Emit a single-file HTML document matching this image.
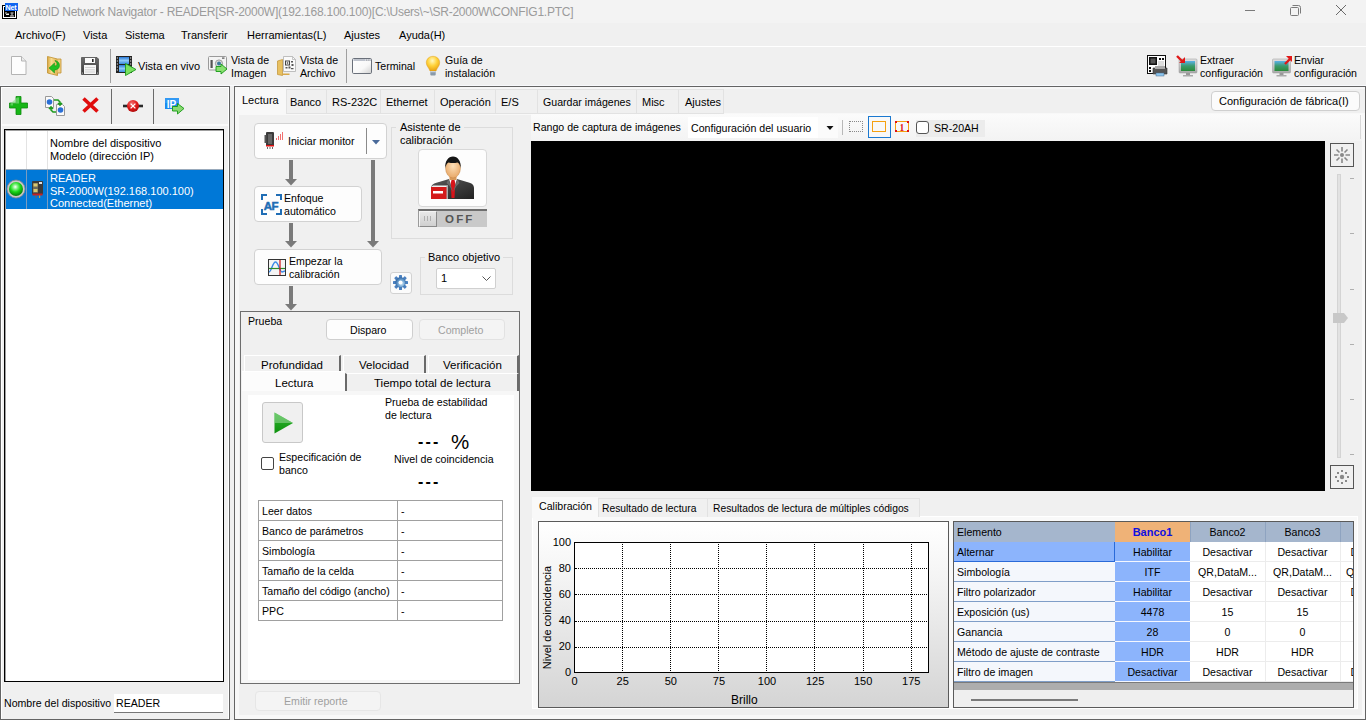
<!DOCTYPE html>
<html><head><meta charset="utf-8">
<style>
*{box-sizing:border-box}
html,body{margin:0;padding:0}
body{width:1366px;height:720px;overflow:hidden;position:relative;background:#f0f0f0;font-family:"Liberation Sans",sans-serif;font-size:11px;color:#000}
.a{position:absolute}
.t{position:absolute;white-space:nowrap;line-height:13px}
svg{position:absolute;overflow:visible}
table.a td{border:1px solid #a0a0a0;height:20px;padding:0 0 0 3px;line-height:18px;white-space:nowrap}
</style></head><body>
<!-- TITLE BAR -->
<div class="a" style="left:0;top:0;width:1366px;height:23px;background:#f3f3f3"></div>
<svg style="left:2px;top:3px" width="16" height="16" viewBox="0 0 16 16">
<rect x="0.5" y="2.5" width="14" height="13" fill="#fff" stroke="#000"/>
<rect x="2" y="4" width="11" height="10" fill="#000"/>
<path d="M3 10h2M4 11.5h3M6 10v1.5M8.5 10h3M10 10.5v2M8 13h4" stroke="#fff" stroke-width="0.9"/>
<rect x="3" y="0" width="13" height="8" fill="#0f64f0"/>
<text x="3.6" y="7.2" font-size="7.2" font-weight="bold" fill="#fff" font-family="Liberation Sans" letter-spacing="-0.3">Net</text>
</svg>
<div class="t" style="left:24px;top:5px;font-size:12px;letter-spacing:-0.25px;color:#9b9b9b;line-height:15px">AutoID Network Navigator - READER[SR-2000W](192.168.100.100)[C:\Users\~\SR-2000W\CONFIG1.PTC]</div>
<svg style="left:1245px;top:10px" width="10" height="1"><rect x="0" y="0" width="10" height="1" fill="#7a7a7a"/></svg>
<svg style="left:1290px;top:5px" width="11" height="11" viewBox="0 0 11 11"><rect x="0.5" y="2.5" width="8" height="8" rx="1" fill="none" stroke="#7a7a7a"/><path d="M2.5 0.5h6a2 2 0 0 1 2 2v6" fill="none" stroke="#7a7a7a"/></svg>
<svg style="left:1336px;top:5px" width="10" height="10" viewBox="0 0 10 10"><path d="M0 0L10 10M10 0L0 10" stroke="#6a6a6a" stroke-width="1"/></svg>

<!-- MENU -->
<div class="t" style="left:15px;top:29px;font-size:11px">Archivo(F)</div>
<div class="t" style="left:83px;top:29px;font-size:11px">Vista</div>
<div class="t" style="left:125px;top:29px;font-size:11px">Sistema</div>
<div class="t" style="left:181px;top:29px;font-size:11px">Transferir</div>
<div class="t" style="left:247px;top:29px;font-size:11px">Herramientas(L)</div>
<div class="t" style="left:344px;top:29px;font-size:11px">Ajustes</div>
<div class="t" style="left:399px;top:29px;font-size:11px">Ayuda(H)</div>
<div class="a" style="left:0;top:46px;width:1366px;height:1px;background:#fff"></div>

<!-- TOOLBAR -->
<!-- new doc -->
<svg style="left:11px;top:56px" width="16" height="19" viewBox="0 0 16 19"><path d="M0.5 0.5h10l4.5 4.5v13.5h-14.5z" fill="#fdfdfd" stroke="#b4b4b4"/><path d="M10.5 0.5v4.5h4.5" fill="#ececec" stroke="#b4b4b4"/></svg>
<!-- open -->
<svg style="left:47px;top:56px" width="15" height="20" viewBox="0 0 15 20"><defs><linearGradient id="gfold" x1="0" y1="0" x2="1" y2="0"><stop offset="0" stop-color="#d9a840"/><stop offset="0.4" stop-color="#f8dc90"/><stop offset="1" stop-color="#e0b050"/></linearGradient></defs><path d="M0.5 0.5l10 2.5v16.5l-10-2.5z" fill="url(#gfold)" stroke="#c09030" stroke-width="0.8"/><path d="M10.5 3h3.5v14h-3.5" fill="#f0d080" stroke="#c09030" stroke-width="0.8"/><path d="M8 4.5c3 0.5 4.5 2.5 4.5 5c0 3-2.5 4.5-5 4.5v3l-5.5-5l5.5-5v3c1.5 0 2.5-0.8 2.5-2c0-1.5-1-2.5-2-3z" fill="#22c022" stroke="#138a13" stroke-width="0.5"/></svg>
<!-- save -->
<svg style="left:81px;top:57px" width="18" height="18" viewBox="0 0 18 18"><defs><linearGradient id="gsave" x1="0" y1="0" x2="0" y2="1"><stop offset="0" stop-color="#6a6a6a"/><stop offset="1" stop-color="#3a3a3a"/></linearGradient></defs><path d="M0.5 0.5h15.5l1.5 1.5v15.5h-17z" fill="url(#gsave)" stroke="#333" stroke-width="0.6"/><rect x="4" y="1" width="10" height="5" fill="#fafafa"/><rect x="11" y="2" width="1.6" height="3" fill="#222"/><rect x="3" y="8" width="12" height="9" fill="#f4f4f4"/><path d="M4 10.5h10M4 12.8h10M4 15h10" stroke="#c8c8c8" stroke-width="0.8"/><circle cx="1.5" cy="16" r="0.6" fill="#ddd"/><circle cx="16.5" cy="16" r="0.6" fill="#ddd"/></svg>
<div class="a" style="left:110px;top:49px;width:1px;height:34px;background:#a0a0a0"></div>
<!-- vista en vivo -->
<svg style="left:116px;top:56px" width="21" height="20" viewBox="0 0 21 20"><defs><linearGradient id="gfilm" x1="0" y1="0" x2="0" y2="1"><stop offset="0" stop-color="#2a7ad8"/><stop offset="0.5" stop-color="#8ec8f8"/><stop offset="1" stop-color="#3a8ae0"/></linearGradient></defs><rect x="0" y="0" width="16" height="17" fill="#222"/><rect x="3" y="1" width="10" height="7" fill="url(#gfilm)"/><rect x="3" y="9" width="10" height="7" fill="url(#gfilm)"/><g fill="#ddd"><rect x="0.8" y="1.5" width="1.2" height="1"/><rect x="0.8" y="4.5" width="1.2" height="1"/><rect x="0.8" y="7.5" width="1.2" height="1"/><rect x="0.8" y="10.5" width="1.2" height="1"/><rect x="0.8" y="13.5" width="1.2" height="1"/><rect x="14" y="1.5" width="1.2" height="1"/><rect x="14" y="4.5" width="1.2" height="1"/><rect x="14" y="7.5" width="1.2" height="1"/><rect x="14" y="10.5" width="1.2" height="1"/><rect x="14" y="13.5" width="1.2" height="1"/></g><path d="M9.5 7.5l10.5 6l-10.5 6z" fill="#7ae060" stroke="#1a9a1a" stroke-width="0.9" stroke-linejoin="round"/></svg>
<div class="t" style="left:138px;top:60px">Vista en vivo</div>
<!-- vista de imagen -->
<svg style="left:208px;top:56px" width="21" height="20" viewBox="0 0 21 20"><rect x="0.5" y="0.5" width="18" height="13.5" rx="1" fill="#f4f4f4" stroke="#9a9a9a"/><rect x="2.5" y="4" width="2.2" height="8" fill="#555"/><circle cx="11" cy="7.5" r="3.6" fill="#ddd" stroke="#888" stroke-width="0.8"/><circle cx="11" cy="7.5" r="2" fill="#3a7a9a"/><rect x="14" y="1.5" width="2.5" height="1.2" fill="#555"/><path d="M8 10.5h5v-2.5l6 5l-6 5v-2.5h-5z" fill="#8ae070" stroke="#159a15" stroke-width="0.9" stroke-linejoin="round"/></svg>
<div class="t" style="left:231px;top:54px;line-height:13px;font-size:10.6px">Vista de<br>Imagen</div>
<!-- vista de archivo -->
<svg style="left:277px;top:56px" width="20" height="20" viewBox="0 0 20 20"><path d="M0.5 5l5-1.5v16l-5-1z" fill="#e8c060" stroke="#c09030" stroke-width="0.7"/><path d="M5.5 17.5h7v1.5h-7" fill="#d8a848"/><path d="M6.5 0.5h9l3 3v12h-12z" fill="#fafafa" stroke="#b0b0b0" stroke-width="0.8"/><path d="M15.5 0.5v3h3" fill="none" stroke="#b0b0b0" stroke-width="0.7"/><rect x="8.5" y="5" width="4" height="4" fill="none" stroke="#444" stroke-width="1"/><rect x="9.8" y="6.3" width="1.4" height="1.4" fill="#444"/><path d="M14 5h2v1.5h-2zM14.5 8h2v2h-2zM8.5 11h2v1.5h-2zM11.5 10.5h2v2h-2zM14 12h2.5v1.2h-2.5z" fill="#555"/></svg>
<div class="t" style="left:300px;top:54px;line-height:13px;font-size:10.6px">Vista de<br>Archivo</div>
<div class="a" style="left:346px;top:49px;width:1px;height:34px;background:#a0a0a0"></div>
<!-- terminal -->
<svg style="left:352px;top:58px" width="21" height="16" viewBox="0 0 21 16"><defs><linearGradient id="gterm" x1="0" y1="0" x2="1" y2="1"><stop offset="0" stop-color="#fff"/><stop offset="0.6" stop-color="#f8f8f8"/><stop offset="1" stop-color="#d0d0d0"/></linearGradient></defs><rect x="0.5" y="0.5" width="19" height="15" rx="1.2" fill="url(#gterm)" stroke="#6a707a"/><rect x="1" y="1" width="18" height="2" fill="#d8dce4"/><path d="M2 2h11" stroke="#9aa0aa" stroke-width="0.8"/><circle cx="14.5" cy="2" r="0.6" fill="#888"/><circle cx="16.3" cy="2" r="0.6" fill="#888"/><circle cx="18" cy="2" r="0.6" fill="#888"/></svg>
<div class="t" style="left:375px;top:60px;font-size:10.6px">Terminal</div>
<!-- bulb -->
<svg style="left:426px;top:56px" width="14" height="20" viewBox="0 0 14 20"><defs><radialGradient id="gbulb" cx="0.45" cy="0.3" r="0.7"><stop offset="0" stop-color="#fff8c0"/><stop offset="0.5" stop-color="#ffd23a"/><stop offset="1" stop-color="#e8a010"/></radialGradient></defs><path d="M7 0.3c3.8 0 6.7 2.8 6.7 6.4c0 3.2-2.6 5-3.7 8.3h-6c-1.1-3.3-3.7-5.1-3.7-8.3c0-3.6 2.9-6.4 6.7-6.4z" fill="url(#gbulb)" stroke="#e0a020" stroke-width="0.5"/><rect x="4.3" y="15" width="5.4" height="4.5" rx="1" fill="#8a9aaa"/><rect x="4.3" y="15" width="5.4" height="1.3" fill="#c8d0d8"/></svg>
<div class="t" style="left:445px;top:54px;line-height:13px;font-size:10.6px">Guía de<br>instalación</div>
<!-- right toolbar -->
<svg style="left:1147px;top:55px" width="21" height="22" viewBox="0 0 21 22"><rect x="0.5" y="0.5" width="18" height="18" fill="#fff" stroke="#111"/><rect x="2" y="2" width="8" height="8" fill="#111"/><rect x="3.5" y="3.5" width="5" height="5" fill="#555"/><path d="M12 3h2v2h-2zM15 3h2v2h-2zM12 7h5v1h-5zM2 12h2v2h-2zM2 15h2v2h-2z" fill="#111"/><rect x="11" y="6" width="6" height="5" fill="#ddd"/><path d="M6 13h14v6h-14z" fill="#555" stroke="#333" stroke-width="0.6"/><rect x="8" y="11" width="10" height="3" fill="#aaa"/><rect x="9" y="18" width="8" height="3" fill="#8ec8f0" stroke="#4a6a8a" stroke-width="0.5"/></svg>
<svg style="left:1176px;top:55px" width="22" height="22" viewBox="0 0 22 22"><defs><linearGradient id="gscr" x1="0" y1="0" x2="0" y2="1"><stop offset="0" stop-color="#5ab0e8"/><stop offset="0.5" stop-color="#3a9a6a"/><stop offset="1" stop-color="#2a8a3a"/></linearGradient><linearGradient id="gfr" x1="0" y1="0" x2="0" y2="1"><stop offset="0" stop-color="#e0e0e0"/><stop offset="1" stop-color="#a8a8a8"/></linearGradient></defs><rect x="3" y="4" width="18" height="14" rx="1" fill="url(#gfr)" stroke="#999" stroke-width="0.5"/><rect x="5" y="6" width="14" height="10" fill="url(#gscr)"/><rect x="10" y="18" width="4" height="2" fill="#999"/><rect x="7" y="20" width="10" height="1.5" fill="#aaa"/><path d="M1 1l6 6" stroke="#e01818" stroke-width="2.4"/><path d="M3 8h6v-6z" fill="#e01818"/></svg>
<div class="t" style="left:1200px;top:54px;line-height:13px;font-size:10.6px">Extraer<br>configuración</div>
<svg style="left:1272px;top:55px" width="22" height="22" viewBox="0 0 22 22"><rect x="0.5" y="4" width="18" height="14" rx="1" fill="url(#gfr)" stroke="#999" stroke-width="0.5"/><rect x="2.5" y="6" width="14" height="10" fill="url(#gscr)"/><rect x="7.5" y="18" width="4" height="2" fill="#999"/><rect x="4.5" y="20" width="10" height="1.5" fill="#aaa"/><path d="M13 9l6-6" stroke="#e01818" stroke-width="2.4"/><path d="M14 1h6v6z" fill="#e01818"/></svg>
<div class="t" style="left:1294px;top:54px;line-height:13px;font-size:10.6px">Enviar<br>configuración</div>


<!-- LEFT PANEL -->
<div class="a" style="left:0;top:85px;width:1366px;height:1px;background:#f8f9fc"></div>
<div class="a" style="left:0;top:86px;width:230px;height:634px;border:1px solid #646464;box-shadow:inset 1px 1px 0 #fff, inset -1px 0 0 #fff"></div>
<div class="a" style="left:2px;top:124px;width:226px;height:2px;background:#fafafa"></div>
<!-- plus -->
<svg style="left:9px;top:96px" width="19" height="19" viewBox="0 0 19 19"><path d="M7 0.5h5v6.5h6.5v5h-6.5v6.5h-5v-6.5h-6.5v-5h6.5z" fill="#17b617" stroke="#0c8a0c" stroke-width="0.8"/><path d="M8 1.5h2v6h-6v2h-2.5v-2" fill="#8be08b" opacity="0.6"/></svg>
<!-- sync -->
<svg style="left:45px;top:96px" width="21" height="20" viewBox="0 0 21 20"><path d="M0.5 0.5h6l2 2v9h-8z" fill="#fafafa" stroke="#999"/><circle cx="4.5" cy="6" r="2.8" fill="#2a6fd6"/><path d="M11.5 8.5h6l2 2v9h-8z" fill="#fafafa" stroke="#999"/><circle cx="15.5" cy="14" r="2.8" fill="#2a6fd6"/><path d="M9 4h4l2 2v3M17 7l-2 2l-2-2" stroke="#1e9a1e" stroke-width="1.6" fill="none"/><path d="M11 16h-3l-2-2v-3M4 13l2-2l2 2" stroke="#1e9a1e" stroke-width="1.6" fill="none"/></svg>
<!-- X -->
<svg style="left:82px;top:97px" width="17" height="16" viewBox="0 0 17 16"><path d="M1.5 1.5L15.5 14.5M15.5 1.5L1.5 14.5" stroke="#e00d0d" stroke-width="3.6"/></svg>
<div class="a" style="left:111px;top:89px;width:1px;height:35px;background:#6a6a6a"></div>
<!-- disconnect -->
<svg style="left:122px;top:97px" width="22" height="18" viewBox="0 0 22 18"><path d="M1 9h20" stroke="#2a2a2a" stroke-width="2.6"/><defs><radialGradient id="gdis" cx="0.4" cy="0.3" r="0.7"><stop offset="0" stop-color="#f07070"/><stop offset="0.6" stop-color="#e01818"/><stop offset="1" stop-color="#b00c0c"/></radialGradient></defs><circle cx="11" cy="9" r="6" fill="url(#gdis)"/><path d="M8.6 6.6l4.8 4.8M13.4 6.6l-4.8 4.8" stroke="#fff" stroke-width="1.3"/></svg>
<div class="a" style="left:153px;top:89px;width:1px;height:35px;background:#6a6a6a"></div>
<!-- IP -->
<svg style="left:165px;top:97px" width="21" height="19" viewBox="0 0 21 19"><rect x="0" y="1" width="14" height="11" fill="#1a8af0"/><rect x="0" y="1" width="14" height="5" fill="#4aa8f8" opacity="0.5"/><text x="1.8" y="10.5" font-size="10" font-weight="bold" fill="#fff" font-family="Liberation Sans">IP</text><path d="M7.5 9.5h5v-3l6.5 5l-6.5 5.5v-3h-5z" fill="#8ad870" stroke="#139a13" stroke-width="0.9" stroke-linejoin="round"/></svg>
<!-- list -->
<div class="a" style="left:4px;top:129px;width:220px;height:553px;background:#fff;border:1px solid #000;box-shadow:inset 1px 1px 0 #a0a0a0"></div>
<div class="a" style="left:26px;top:131px;width:1px;height:39px;background:#e3e3e3"></div>
<div class="a" style="left:47px;top:131px;width:1px;height:39px;background:#e3e3e3"></div>
<div class="t" style="left:50px;top:137px;font-size:11px;line-height:13px">Nombre del dispositivo<br>Modelo (dirección IP)</div>
<div class="a" style="left:6px;top:169px;width:217px;height:40px;background:#0078d7"></div>
<div class="a" style="left:26px;top:169px;width:1px;height:40px;background:#7a9cc0"></div>
<div class="a" style="left:47px;top:169px;width:1px;height:40px;background:#7a9cc0"></div>
<div class="a" style="left:6px;top:169px;width:217px;height:1px;background:#9ab"></div>
<svg style="left:6px;top:179px" width="20" height="20" viewBox="0 0 20 20"><defs><radialGradient id="gled" cx="0.45" cy="0.35" r="0.6"><stop offset="0" stop-color="#ffffff"/><stop offset="0.3" stop-color="#7af07a"/><stop offset="0.6" stop-color="#18d818"/><stop offset="1" stop-color="#0a8a0a"/></radialGradient></defs><circle cx="10" cy="10" r="9" fill="#c8c8c8" stroke="#888" stroke-width="0.8"/><circle cx="10" cy="10" r="7" fill="url(#gled)"/></svg>
<svg style="left:32px;top:181px" width="11" height="17" viewBox="0 0 11 17"><rect x="0" y="0" width="11" height="13.5" rx="1" fill="#3a3a3a"/><rect x="1" y="2" width="5" height="10" fill="#6a6a5a"/><rect x="1.5" y="2.5" width="4" height="3" fill="#d8c870"/><rect x="1.5" y="8" width="4" height="3" fill="#d8c870"/><rect x="7" y="1" width="3" height="2" fill="#e0e0e0"/><rect x="0.5" y="12.5" width="10" height="2" fill="#c82020"/><rect x="3.5" y="14.5" width="1.2" height="2.5" fill="#666"/><rect x="7" y="14.5" width="1.2" height="2.5" fill="#c8a040"/></svg>
<div class="t" style="left:50px;top:172px;font-size:11px;line-height:12.5px;color:#fff">READER<br>SR-2000W(192.168.100.100)<br>Connected(Ethernet)</div>
<div class="t" style="left:4px;top:697px;font-size:10.6px">Nombre del dispositivo</div>
<div class="a" style="left:114px;top:694px;width:109px;height:19px;background:#fff;border-bottom:1px solid #777"></div>
<div class="t" style="left:116px;top:697px;font-size:10.6px">READER</div>


<!-- MAIN PANEL -->
<div class="a" style="left:234px;top:86px;width:1132px;height:634px;border:1px solid #646464;background:#f0f0f0;box-shadow:inset 1px 1px 0 #fff"></div>
<div class="a" style="left:235px;top:87px;width:1130px;height:2px;background:#f6f6f6"></div>
<div class="a" style="left:235px;top:113px;width:1130px;height:606px;background:#f8f8f8"></div>
<!-- tabs -->
<div class="a" style="left:286px;top:89px;width:438px;height:25px;background:#f0f0f0;border:1px solid #e2e2e2"></div>
<div class="a" style="left:326px;top:89px;width:1px;height:25px;background:#e2e2e2"></div>
<div class="a" style="left:380px;top:89px;width:1px;height:25px;background:#e2e2e2"></div>
<div class="a" style="left:434px;top:89px;width:1px;height:25px;background:#e2e2e2"></div>
<div class="a" style="left:495px;top:89px;width:1px;height:25px;background:#e2e2e2"></div>
<div class="a" style="left:537px;top:89px;width:1px;height:25px;background:#e2e2e2"></div>
<div class="a" style="left:636px;top:89px;width:1px;height:25px;background:#e2e2e2"></div>
<div class="a" style="left:678px;top:89px;width:1px;height:25px;background:#e2e2e2"></div>
<div class="a" style="left:235px;top:87px;width:51px;height:28px;background:#f8f8f8"></div>
<div class="t" style="left:242px;top:94px">Lectura</div>
<div class="t" style="left:290px;top:96px">Banco</div>
<div class="t" style="left:332px;top:96px">RS-232C</div>
<div class="t" style="left:386px;top:96px">Ethernet</div>
<div class="t" style="left:440px;top:96px">Operación</div>
<div class="t" style="left:501px;top:96px">E/S</div>
<div class="t" style="left:543px;top:96px;font-size:10.6px">Guardar imágenes</div>
<div class="t" style="left:642px;top:96px">Misc</div>
<div class="t" style="left:685px;top:96px">Ajustes</div>
<div class="a" style="left:1211px;top:91px;width:149px;height:20px;background:#fbfbfb;border:1px solid #cfcfcf;border-radius:4px"></div>
<div class="t" style="left:1219px;top:95px">Configuración de fábrica(I)</div>
<!-- tab page -->
<div class="a" style="left:239px;top:115px;width:1123px;height:600px;background:#f0f0f0"></div>

<!-- LEFT CONFIG -->
<!-- Iniciar monitor -->
<div class="a" style="left:254px;top:123px;width:133px;height:36px;background:#fdfdfd;border:1px solid #d2d2d2;border-radius:4px"></div>
<svg style="left:264px;top:130px" width="20" height="20" viewBox="0 0 20 20"><rect x="2" y="2" width="8" height="14" rx="1" fill="#3b3b3b"/><rect x="0.5" y="5" width="2" height="8" fill="#555"/><rect x="4" y="4" width="4" height="10" fill="#666"/><rect x="2" y="15" width="8" height="1.5" fill="#e01010"/><path d="M3.5 17v2M6 17v2M8.5 17v2" stroke="#444" stroke-width="0.8"/><path d="M12.5 8v2M14.5 6v4M16.5 4v6M18.5 2v8" stroke="#f07070" stroke-width="1"/></svg>
<div class="t" style="left:288px;top:135px;font-size:10.6px">Iniciar monitor</div>
<div class="a" style="left:366px;top:128px;width:1px;height:26px;background:#8a8a8a"></div>
<svg style="left:372px;top:140px" width="8" height="5" viewBox="0 0 8 5"><path d="M0 0h8l-4 4.5z" fill="#4a6a9a"/></svg>
<!-- arrows -->
<div class="a" style="left:289px;top:160px;width:4px;height:20px;background:#7a7a7a"></div>
<svg style="left:285px;top:179px" width="12" height="7" viewBox="0 0 12 7"><path d="M0 0h12l-6 6.5z" fill="#7a7a7a"/></svg>
<div class="a" style="left:289px;top:223px;width:4px;height:19px;background:#7a7a7a"></div>
<svg style="left:285px;top:241px" width="12" height="7" viewBox="0 0 12 7"><path d="M0 0h12l-6 6.5z" fill="#7a7a7a"/></svg>
<div class="a" style="left:289px;top:286px;width:4px;height:19px;background:#7a7a7a"></div>
<svg style="left:285px;top:304px" width="12" height="7" viewBox="0 0 12 7"><path d="M0 0h12l-6 6.5z" fill="#7a7a7a"/></svg>
<div class="a" style="left:371px;top:160px;width:4px;height:82px;background:#7a7a7a"></div>
<svg style="left:367px;top:241px" width="12" height="7" viewBox="0 0 12 7"><path d="M0 0h12l-6 6.5z" fill="#7a7a7a"/></svg>
<!-- Enfoque -->
<div class="a" style="left:254px;top:186px;width:108px;height:36px;background:#fdfdfd;border:1px solid #d2d2d2;border-radius:4px"></div>
<svg style="left:261px;top:194px" width="21" height="21" viewBox="0 0 21 21"><path d="M1 6v-5h5M15 1h5v5M20 15v5h-5M6 20h-5v-5" stroke="#1f6db5" stroke-width="2" fill="none"/><text x="2.8" y="15.8" font-size="11.5" font-weight="bold" fill="#1f6db5" stroke="#1f6db5" stroke-width="0.5" font-family="Liberation Sans" letter-spacing="-0.5">AF</text></svg>
<div class="t" style="left:284px;top:192px;font-size:10.6px;line-height:13px">Enfoque<br>automático</div>
<!-- Empezar -->
<div class="a" style="left:254px;top:249px;width:128px;height:36px;background:#fdfdfd;border:1px solid #d2d2d2;border-radius:4px"></div>
<svg style="left:268px;top:259px" width="18" height="17" viewBox="0 0 18 17"><rect x="0.5" y="0.5" width="17" height="16" fill="#f4f4f4" stroke="#333"/><path d="M1 13c2.5 0 3.5-10 6.5-10s4 10 6.5 10c1.5 0 2-1 3-1" stroke="#3a8ae8" stroke-width="1.4" fill="none"/><path d="M1 9.5h16" stroke="#2a8a2a" stroke-width="1.2"/><path d="M12 1v15" stroke="#d01010" stroke-width="1.2"/></svg>
<div class="t" style="left:289px;top:255px;font-size:10.6px;line-height:13px">Empezar la<br>calibración</div>
<!-- Asistente group -->
<div class="a" style="left:391px;top:127px;width:122px;height:112px;border:1px solid #dcdcdc"></div>
<div class="a" style="left:396px;top:120px;width:68px;height:14px;background:#f0f0f0"></div>
<div class="t" style="left:400px;top:121px;font-size:11px;line-height:13px;background:#f0f0f0;padding-right:3px">Asistente de<br>calibración</div>
<div class="a" style="left:418px;top:149px;width:69px;height:58px;background:#fdfdfd;border:1px solid #d8d8d8;border-radius:4px"></div>
<svg style="left:431px;top:156px" width="44" height="43" viewBox="0 0 44 43">
<defs><linearGradient id="gsuit" x1="0" y1="0" x2="1" y2="1"><stop offset="0" stop-color="#5a5a5a"/><stop offset="1" stop-color="#222"/></linearGradient>
<radialGradient id="gface" cx="0.5" cy="0.4" r="0.6"><stop offset="0" stop-color="#fde0b8"/><stop offset="1" stop-color="#e8a868"/></radialGradient></defs>
<path d="M0 43v-11c0-3 3-5 8-6l10-3h8l10 3c5 1 7 3 7 6v11z" fill="url(#gsuit)"/>
<path d="M18 23l4 13l4-13z" fill="#fff"/>
<path d="M20.5 24h3l0.8 3l-0.8 15h-3l-0.8-15z" fill="#d8141a"/>
<path d="M17.5 23l-2 4l3 3l3.5 6zM26.5 23l2 4l-3 3l-3.5 6z" fill="#6a6a6a"/>
<rect x="18.5" y="17" width="7" height="7" fill="#d99a5a"/>
<ellipse cx="22" cy="12" rx="7.5" ry="10" fill="url(#gface)" stroke="#c08040" stroke-width="0.4"/>
<path d="M14.3 12c-0.5-7 3-11.5 7.7-11.5s8.2 4.5 7.7 11.5c-0.6-3-1.6-5-3.2-5.6c-3 0.8-6 0.8-9 0c-1.6 0.6-2.6 2.6-3.2 5.6z" fill="#151515"/>
<rect x="0" y="31" width="17" height="12" fill="#d41a1a"/>
<path d="M0 31l2-1.5h15v1.5" fill="#f0f0f0"/>
<rect x="15.5" y="30" width="1.5" height="13" fill="#aaa"/>
<rect x="2" y="35" width="10" height="2.5" fill="#fff"/>
</svg>
<div class="a" style="left:418px;top:209px;width:69px;height:18px;background:#c9c9c9;border-top:2px solid #6e6e6e;border-left:1px solid #9a9a9a"></div>
<div class="a" style="left:419px;top:211px;width:18px;height:16px;background:linear-gradient(#e8e8e8,#d0d0d0);border:1px solid #8a8a8a;border-top-color:#f4f4f4;border-left-color:#f4f4f4"></div><svg style="left:423px;top:216px" width="9" height="5"><path d="M1.5 0v5M4.5 0v5M7.5 0v5" stroke="#b0b0b0"/></svg>
<div class="t" style="left:445px;top:213px;font-size:11.5px;font-weight:bold;color:#555;letter-spacing:2.2px">OFF</div>
<!-- Banco objetivo group -->
<div class="a" style="left:420px;top:257px;width:93px;height:38px;border:1px solid #dcdcdc"></div>
<div class="t" style="left:425px;top:251px;font-size:11px;background:#f0f0f0;padding:0 3px">Banco objetivo</div>
<div class="a" style="left:436px;top:268px;width:60px;height:21px;background:#fff;border:1px solid #d0d0d0;border-radius:2px"></div>
<div class="t" style="left:441px;top:272px;font-size:11px">1</div>
<svg style="left:482px;top:276px" width="9" height="5" viewBox="0 0 9 5"><path d="M0.5 0.5l4 4l4-4" stroke="#555" fill="none"/></svg>
<!-- gear -->
<div class="a" style="left:390px;top:272px;width:22px;height:22px;background:#fbfbfb;border:1px solid #d2d2d2;border-radius:3px"></div>
<svg style="left:393px;top:275px" width="15" height="15" viewBox="0 0 15 15"><defs><radialGradient id="ggear" cx="0.6" cy="0.6" r="0.6"><stop offset="0" stop-color="#d8ecf8"/><stop offset="0.6" stop-color="#6aa0d0"/><stop offset="1" stop-color="#3a6ea8"/></radialGradient></defs><g fill="#4a80c0"><rect x="6" y="0" width="3" height="4" rx="0.6" transform="rotate(0 7.5 7.5)"/><rect x="6" y="0" width="3" height="4" rx="0.6" transform="rotate(45 7.5 7.5)"/><rect x="6" y="0" width="3" height="4" rx="0.6" transform="rotate(90 7.5 7.5)"/><rect x="6" y="0" width="3" height="4" rx="0.6" transform="rotate(135 7.5 7.5)"/><rect x="6" y="0" width="3" height="4" rx="0.6" transform="rotate(180 7.5 7.5)"/><rect x="6" y="0" width="3" height="4" rx="0.6" transform="rotate(225 7.5 7.5)"/><rect x="6" y="0" width="3" height="4" rx="0.6" transform="rotate(270 7.5 7.5)"/><rect x="6" y="0" width="3" height="4" rx="0.6" transform="rotate(315 7.5 7.5)"/></g><circle cx="7.5" cy="7.5" r="5" fill="url(#ggear)" stroke="#3a6ea8" stroke-width="0.5"/><circle cx="7.5" cy="7.5" r="2" fill="#fff"/></svg>
<!-- Prueba box -->
<div class="a" style="left:240px;top:311px;width:280px;height:373px;border:1px solid #6e6e6e;background:#f0f0f0"></div>
<div class="t" style="left:248px;top:315px;font-size:10.6px">Prueba</div>
<div class="a" style="left:326px;top:319px;width:87px;height:21px;background:#fdfdfd;border:1px solid #cfcfcf;border-radius:4px"></div>
<div class="t" style="left:350px;top:324px;font-size:10.6px">Disparo</div>
<div class="a" style="left:419px;top:319px;width:86px;height:21px;background:#f4f4f4;border:1px solid #e2e2e2;border-radius:4px"></div>
<div class="t" style="left:438px;top:324px;font-size:10.6px;color:#a0a0a0">Completo</div>
<!-- sub tabs row 1 -->
<div class="a" style="left:244px;top:355px;width:97px;height:19px;background:#f0f0f0;border:1px solid #fff;border-right:2px solid #6a6a6a;border-bottom:none"></div>
<div class="a" style="left:343px;top:355px;width:83px;height:19px;background:#f0f0f0;border:1px solid #fff;border-right:2px solid #6a6a6a;border-bottom:none"></div>
<div class="a" style="left:428px;top:355px;width:91px;height:19px;background:#f0f0f0;border:1px solid #fff;border-right:2px solid #6a6a6a;border-bottom:none"></div>
<div class="t" style="left:261px;top:359px;font-size:11.5px">Profundidad</div>
<div class="t" style="left:359px;top:359px;font-size:11.5px">Velocidad</div>
<div class="t" style="left:443px;top:359px;font-size:11.5px">Verificación</div>
<!-- sub tabs row 2 -->
<div class="a" style="left:345px;top:373px;width:174px;height:19px;background:#f0f0f0;border:1px solid #fff;border-left:2px solid #6a6a6a;border-right:2px solid #6a6a6a;border-bottom:none"></div>
<div class="t" style="left:374px;top:377px;font-size:11.5px">Tiempo total de lectura</div>
<div class="a" style="left:242px;top:371px;width:103px;height:22px;background:#fcfcfc;border-top:1px solid #fff"></div>
<div class="t" style="left:275px;top:377px;font-size:11.5px">Lectura</div>
<!-- sub content -->
<div class="a" style="left:242px;top:391px;width:277px;height:292px;background:#f7f7f7"></div>
<div class="a" style="left:248px;top:395px;width:266px;height:285px;background:#fff"></div>
<div class="a" style="left:262px;top:402px;width:41px;height:41px;background:#f0f0f0;border:1px solid #c8c8c8;border-radius:3px"></div>
<svg style="left:274px;top:412px" width="20" height="22" viewBox="0 0 20 22"><defs><linearGradient id="gplay" x1="0" y1="0" x2="0" y2="1"><stop offset="0" stop-color="#30b830"/><stop offset="1" stop-color="#0e900e"/></linearGradient></defs><path d="M0.5 0.5l18.5 10.5l-18.5 10.5z" fill="url(#gplay)"/><path d="M0.5 0.5l18.5 10.5h-18.5z" fill="#9ad89a" opacity="0.55"/></svg>
<div class="a" style="left:261px;top:457px;width:13px;height:13px;background:#fff;border:1px solid #444;border-radius:2px"></div>
<div class="t" style="left:279px;top:451px;font-size:10.6px;line-height:13px">Especificación de<br>banco</div>
<div class="t" style="left:385px;top:396px;font-size:10.6px;line-height:13px">Prueba de estabilidad<br>de lectura</div>
<div class="t" style="left:418px;top:433px;font-size:16px;line-height:18px;font-weight:bold;letter-spacing:2.2px">---</div>
<div class="t" style="left:451px;top:432px;font-size:20.5px;line-height:19px">%</div>
<div class="t" style="left:394px;top:453px;font-size:10.6px">Nivel de coincidencia</div>
<div class="t" style="left:418px;top:473px;font-size:16px;line-height:18px;font-weight:bold;letter-spacing:2.2px">---</div>
<!-- data table -->
<table class="a" style="left:258px;top:500px;border-collapse:collapse;font-size:10.6px;background:#fff">
<tr><td style="width:139px">Leer datos</td><td style="width:105px">-</td></tr>
<tr><td>Banco de parámetros</td><td>-</td></tr>
<tr><td>Simbología</td><td>-</td></tr>
<tr><td>Tamaño de la celda</td><td>-</td></tr>
<tr><td>Tamaño del código (ancho)</td><td>-</td></tr>
<tr><td>PPC</td><td>-</td></tr>
</table>
<div class="a" style="left:255px;top:691px;width:126px;height:20px;background:#f4f4f4;border:1px solid #e6e6e6;border-radius:4px"></div>
<div class="t" style="left:284px;top:695px;font-size:10.6px;color:#a0a0a0">Emitir reporte</div>

<!-- IMAGE PANEL -->
<div class="a" style="left:531px;top:114px;width:831px;height:27px;background:linear-gradient(#fbfbfb,#f3f3f3)"></div>
<div class="a" style="left:1360px;top:115px;width:1px;height:24px;background:#d8d8d8"></div>
<div class="t" style="left:533px;top:121px;font-size:10.6px">Rango de captura de imágenes</div>
<div class="a" style="left:688px;top:117px;width:150px;height:21px;background:#fff"></div>
<div class="a" style="left:818px;top:117px;width:20px;height:21px;background:#fbfbfb"></div>
<div class="t" style="left:691px;top:122px;font-size:10.6px">Configuración del usuario</div>
<svg style="left:826px;top:126px" width="8" height="4" viewBox="0 0 8 4"><path d="M0.5 0h7l-3.5 4z" fill="#111"/></svg>
<div class="a" style="left:842px;top:120px;width:1px;height:15px;background:#b8b8b8"></div>
<div class="a" style="left:849px;top:121px;width:14px;height:11px;border:1px dotted #888"></div>
<div class="a" style="left:868px;top:116px;width:23px;height:22px;border:1px solid #1a78d0;background:#f8f8f8"></div>
<div class="a" style="left:872px;top:121px;width:14px;height:11px;border:1.5px solid #f5a010"></div>
<div class="a" style="left:895px;top:121px;width:14px;height:11px;border:1.5px solid #f5a010"></div>
<svg style="left:895px;top:121px" width="14" height="11" viewBox="0 0 14 11"><rect x="0" y="0" width="2" height="2" fill="#e01010"/><rect x="12" y="0" width="2" height="2" fill="#e01010"/><rect x="0" y="9" width="2" height="2" fill="#e01010"/><rect x="12" y="9" width="2" height="2" fill="#e01010"/><text x="4.5" y="9.5" font-size="9.5" font-weight="bold" fill="#e01010" font-family="Liberation Serif">1</text></svg>
<div class="a" style="left:916px;top:120px;width:69px;height:17px;background:#ececec"></div>
<div class="a" style="left:916px;top:121px;width:13px;height:13px;background:#fff;border:1px solid #555;border-radius:3px"></div>
<div class="t" style="left:934px;top:122px;font-size:10.6px">SR-20AH</div>
<!-- black view -->
<div class="a" style="left:531px;top:141px;width:794px;height:350px;background:#000"></div>
<!-- right controls -->
<div class="a" style="left:1330px;top:143px;width:24px;height:24px;border:1px solid #555;background:#f0f0f0"></div>
<svg style="left:1332px;top:145px" width="20" height="20" viewBox="0 0 20 20"><circle cx="10" cy="10" r="2" fill="#888"/><g stroke="#888" stroke-width="1.6"><path d="M10 2v4.5M10 13.5v4.5M2 10h4.5M13.5 10h4.5M4.5 4.5l3 3M12.5 12.5l3 3M15.5 4.5l-3 3M7.5 12.5l-3 3"/></g></svg>
<div class="a" style="left:1337px;top:174px;width:4px;height:284px;background:#e2e2e2;border:1px solid #d4d4d4"></div>
<svg style="left:1350px;top:178px" width="6" height="280" viewBox="0 0 6 280"><g stroke="#b0b0b0"><path d="M0 0.5h4M0 55.5h4M0 111.5h4M0 166.5h4M0 221.5h4M0 276.5h4"/></g></svg>
<svg style="left:1333px;top:313px" width="16" height="10" viewBox="0 0 16 10"><path d="M0 0h11l4 5l-4 5h-11z" fill="#c8c8c8"/></svg>
<div class="a" style="left:1330px;top:465px;width:24px;height:24px;border:1px solid #555;background:#f0f0f0"></div>
<svg style="left:1332px;top:467px" width="20" height="20" viewBox="0 0 20 20"><circle cx="10" cy="10" r="2.2" fill="#888"/><g fill="#888"><rect x="9" y="3" width="2" height="2"/><rect x="9" y="15" width="2" height="2"/><rect x="3" y="9" width="2" height="2"/><rect x="15" y="9" width="2" height="2"/><rect x="5" y="5" width="2" height="2"/><rect x="13" y="5" width="2" height="2"/><rect x="5" y="13" width="2" height="2"/><rect x="13" y="13" width="2" height="2"/></g></svg>

<!-- BOTTOM PANEL -->
<div class="a" style="left:532px;top:516px;width:826px;height:193px;background:#f9f9f9;border:1px solid #fff"></div>
<div class="a" style="left:598px;top:498px;width:322px;height:19px;background:#f0f0f0;border:1px solid #e2e2e2;border-bottom:none"></div>
<div class="a" style="left:707px;top:498px;width:1px;height:19px;background:#e2e2e2"></div>
<div class="a" style="left:532px;top:497px;width:66px;height:21px;background:#f9f9f9"></div>
<div class="t" style="left:539px;top:500px;font-size:10.6px">Calibración</div>
<div class="t" style="left:602px;top:502px;font-size:10.3px">Resultado de lectura</div>
<div class="t" style="left:713px;top:502px;font-size:10.3px">Resultados de lectura de múltiples códigos</div>
<!-- chart -->
<div class="a" style="left:538px;top:521px;width:411px;height:187px;border:1px solid #5a5a5a;background:linear-gradient(#ffffff,#f4f4f4 30%,#d4d4d4)"></div>
<div class="a" style="left:574px;top:542px;width:355px;height:131px;border:1px solid #000;background:#fff"></div>
<div class="a" style="left:575px;top:568px;width:354px;height:0;border-top:1px dotted #000"></div><div class="a" style="left:575px;top:594px;width:354px;height:0;border-top:1px dotted #000"></div><div class="a" style="left:575px;top:621px;width:354px;height:0;border-top:1px dotted #000"></div><div class="a" style="left:575px;top:647px;width:354px;height:0;border-top:1px dotted #000"></div><div class="a" style="left:622px;top:542px;width:0;height:131px;border-left:1px dotted #000"></div><div class="a" style="left:670px;top:542px;width:0;height:131px;border-left:1px dotted #000"></div><div class="a" style="left:718px;top:542px;width:0;height:131px;border-left:1px dotted #000"></div><div class="a" style="left:766px;top:542px;width:0;height:131px;border-left:1px dotted #000"></div><div class="a" style="left:814px;top:542px;width:0;height:131px;border-left:1px dotted #000"></div><div class="a" style="left:863px;top:542px;width:0;height:131px;border-left:1px dotted #000"></div><div class="a" style="left:911px;top:542px;width:0;height:131px;border-left:1px dotted #000"></div>
<div class="t" style="left:540px;top:665.9px;width:31px;text-align:right;font-size:11px">0</div><div class="t" style="left:540px;top:639.9px;width:31px;text-align:right;font-size:11px">20</div><div class="t" style="left:540px;top:613.9px;width:31px;text-align:right;font-size:11px">40</div><div class="t" style="left:540px;top:587.9px;width:31px;text-align:right;font-size:11px">60</div><div class="t" style="left:540px;top:561.9px;width:31px;text-align:right;font-size:11px">80</div><div class="t" style="left:540px;top:535.9px;width:31px;text-align:right;font-size:11px">100</div><div class="t" style="left:554.6px;top:675px;width:40px;text-align:center;font-size:11px">0</div><div class="t" style="left:602.7px;top:675px;width:40px;text-align:center;font-size:11px">25</div><div class="t" style="left:650.8px;top:675px;width:40px;text-align:center;font-size:11px">50</div><div class="t" style="left:698.9px;top:675px;width:40px;text-align:center;font-size:11px">75</div><div class="t" style="left:747.0px;top:675px;width:40px;text-align:center;font-size:11px">100</div><div class="t" style="left:795.1px;top:675px;width:40px;text-align:center;font-size:11px">125</div><div class="t" style="left:843.2px;top:675px;width:40px;text-align:center;font-size:11px">150</div><div class="t" style="left:891.3px;top:675px;width:40px;text-align:center;font-size:11px">175</div>
<div class="t" style="left:731px;top:694px;font-size:12px">Brillo</div>
<div class="t" style="left:495px;top:611px;width:104px;text-align:center;font-size:11px;transform:rotate(-90deg)">Nivel de coincidencia</div>
<div class="a" style="left:953px;top:521px;width:401px;height:187px;border:1px solid #5a5a5a;background:#efefef;overflow:hidden">
<div class="a" style="left:0;top:0;width:400px;height:20px;background:#a5b6cd"></div>
<div class="a" style="left:161px;top:0;width:75px;height:20px;background:#efb277"></div>
<div class="a" style="left:236px;top:0;width:1px;height:20px;background:#8ea3c0"></div>
<div class="a" style="left:311px;top:0;width:1px;height:20px;background:#8ea3c0"></div>
<div class="a" style="left:386px;top:0;width:1px;height:20px;background:#8ea3c0"></div>
<div class="t" style="left:3px;top:4px;font-size:10.6px">Elemento</div>
<div class="t" style="left:161px;top:4px;width:75px;text-align:center;font-size:11px;font-weight:bold;color:#1010e0">Banco1</div>
<div class="t" style="left:236px;top:4px;width:75px;text-align:center;font-size:10.6px">Banco2</div>
<div class="t" style="left:311px;top:4px;width:75px;text-align:center;font-size:10.6px">Banco3</div>
<div class="a" style="left:0;top:20px;width:161px;height:20px;background:#8cb4fc;border-bottom:1px solid #7f9ec8"></div>
<div class="a" style="left:0;top:20px;width:161px;height:20px;border-bottom:1px solid #2a6ad8;border-right:1px solid #2a6ad8"></div>
<div class="a" style="left:161px;top:20px;width:75px;height:20px;background:#8cb4fc;border-bottom:1px solid #f4f7ff"></div>
<div class="a" style="left:236px;top:20px;width:164px;height:20px;background:#fff;border-bottom:1px solid #ececec"></div>
<div class="a" style="left:311px;top:20px;width:1px;height:20px;background:#ececec"></div>
<div class="a" style="left:386px;top:20px;width:1px;height:20px;background:#ececec"></div>
<div class="t" style="left:3px;top:24px;font-size:10.6px">Alternar</div>
<div class="t" style="left:161px;top:24px;width:75px;text-align:center;font-size:10.6px">Habilitar</div>
<div class="t" style="left:236px;top:24px;width:75px;text-align:center;font-size:10.6px">Desactivar</div>
<div class="t" style="left:311px;top:24px;width:75px;text-align:center;font-size:10.6px">Desactivar</div>
<div class="t" style="left:384px;top:24px;width:75px;text-align:center;font-size:10.6px">Desactivar</div>
<div class="a" style="left:0;top:40px;width:161px;height:20px;background:#f4f7fc;border-bottom:1px solid #7f9ec8"></div>
<div class="a" style="left:161px;top:40px;width:75px;height:20px;background:#8cb4fc;border-bottom:1px solid #f4f7ff"></div>
<div class="a" style="left:236px;top:40px;width:164px;height:20px;background:#fff;border-bottom:1px solid #ececec"></div>
<div class="a" style="left:311px;top:40px;width:1px;height:20px;background:#ececec"></div>
<div class="a" style="left:386px;top:40px;width:1px;height:20px;background:#ececec"></div>
<div class="t" style="left:3px;top:44px;font-size:10.6px">Simbología</div>
<div class="t" style="left:161px;top:44px;width:75px;text-align:center;font-size:10.6px">ITF</div>
<div class="t" style="left:236px;top:44px;width:75px;text-align:center;font-size:10.6px">QR,DataM...</div>
<div class="t" style="left:311px;top:44px;width:75px;text-align:center;font-size:10.6px">QR,DataM...</div>
<div class="t" style="left:384px;top:44px;width:75px;text-align:center;font-size:10.6px">QR,DataM...</div>
<div class="a" style="left:0;top:60px;width:161px;height:20px;background:#f4f7fc;border-bottom:1px solid #7f9ec8"></div>
<div class="a" style="left:161px;top:60px;width:75px;height:20px;background:#8cb4fc;border-bottom:1px solid #f4f7ff"></div>
<div class="a" style="left:236px;top:60px;width:164px;height:20px;background:#fff;border-bottom:1px solid #ececec"></div>
<div class="a" style="left:311px;top:60px;width:1px;height:20px;background:#ececec"></div>
<div class="a" style="left:386px;top:60px;width:1px;height:20px;background:#ececec"></div>
<div class="t" style="left:3px;top:64px;font-size:10.6px">Filtro polarizador</div>
<div class="t" style="left:161px;top:64px;width:75px;text-align:center;font-size:10.6px">Habilitar</div>
<div class="t" style="left:236px;top:64px;width:75px;text-align:center;font-size:10.6px">Desactivar</div>
<div class="t" style="left:311px;top:64px;width:75px;text-align:center;font-size:10.6px">Desactivar</div>
<div class="t" style="left:384px;top:64px;width:75px;text-align:center;font-size:10.6px">Desactivar</div>
<div class="a" style="left:0;top:80px;width:161px;height:20px;background:#f4f7fc;border-bottom:1px solid #7f9ec8"></div>
<div class="a" style="left:161px;top:80px;width:75px;height:20px;background:#8cb4fc;border-bottom:1px solid #f4f7ff"></div>
<div class="a" style="left:236px;top:80px;width:164px;height:20px;background:#fff;border-bottom:1px solid #ececec"></div>
<div class="a" style="left:311px;top:80px;width:1px;height:20px;background:#ececec"></div>
<div class="a" style="left:386px;top:80px;width:1px;height:20px;background:#ececec"></div>
<div class="t" style="left:3px;top:84px;font-size:10.6px">Exposición (us)</div>
<div class="t" style="left:161px;top:84px;width:75px;text-align:center;font-size:10.6px">4478</div>
<div class="t" style="left:236px;top:84px;width:75px;text-align:center;font-size:10.6px">15</div>
<div class="t" style="left:311px;top:84px;width:75px;text-align:center;font-size:10.6px">15</div>
<div class="a" style="left:0;top:100px;width:161px;height:20px;background:#f4f7fc;border-bottom:1px solid #7f9ec8"></div>
<div class="a" style="left:161px;top:100px;width:75px;height:20px;background:#8cb4fc;border-bottom:1px solid #f4f7ff"></div>
<div class="a" style="left:236px;top:100px;width:164px;height:20px;background:#fff;border-bottom:1px solid #ececec"></div>
<div class="a" style="left:311px;top:100px;width:1px;height:20px;background:#ececec"></div>
<div class="a" style="left:386px;top:100px;width:1px;height:20px;background:#ececec"></div>
<div class="t" style="left:3px;top:104px;font-size:10.6px">Ganancia</div>
<div class="t" style="left:161px;top:104px;width:75px;text-align:center;font-size:10.6px">28</div>
<div class="t" style="left:236px;top:104px;width:75px;text-align:center;font-size:10.6px">0</div>
<div class="t" style="left:311px;top:104px;width:75px;text-align:center;font-size:10.6px">0</div>
<div class="a" style="left:0;top:120px;width:161px;height:20px;background:#f4f7fc;border-bottom:1px solid #7f9ec8"></div>
<div class="a" style="left:161px;top:120px;width:75px;height:20px;background:#8cb4fc;border-bottom:1px solid #f4f7ff"></div>
<div class="a" style="left:236px;top:120px;width:164px;height:20px;background:#fff;border-bottom:1px solid #ececec"></div>
<div class="a" style="left:311px;top:120px;width:1px;height:20px;background:#ececec"></div>
<div class="a" style="left:386px;top:120px;width:1px;height:20px;background:#ececec"></div>
<div class="t" style="left:3px;top:124px;font-size:10.6px">Método de ajuste de contraste</div>
<div class="t" style="left:161px;top:124px;width:75px;text-align:center;font-size:10.6px">HDR</div>
<div class="t" style="left:236px;top:124px;width:75px;text-align:center;font-size:10.6px">HDR</div>
<div class="t" style="left:311px;top:124px;width:75px;text-align:center;font-size:10.6px">HDR</div>
<div class="a" style="left:0;top:140px;width:161px;height:20px;background:#f4f7fc;border-bottom:1px solid #7f9ec8"></div>
<div class="a" style="left:161px;top:140px;width:75px;height:20px;background:#8cb4fc;border-bottom:1px solid #f4f7ff"></div>
<div class="a" style="left:236px;top:140px;width:164px;height:20px;background:#fff;border-bottom:1px solid #ececec"></div>
<div class="a" style="left:311px;top:140px;width:1px;height:20px;background:#ececec"></div>
<div class="a" style="left:386px;top:140px;width:1px;height:20px;background:#ececec"></div>
<div class="t" style="left:3px;top:144px;font-size:10.6px">Filtro de imagen</div>
<div class="t" style="left:161px;top:144px;width:75px;text-align:center;font-size:10.6px">Desactivar</div>
<div class="t" style="left:236px;top:144px;width:75px;text-align:center;font-size:10.6px">Desactivar</div>
<div class="t" style="left:311px;top:144px;width:75px;text-align:center;font-size:10.6px">Desactivar</div>
<div class="t" style="left:384px;top:144px;width:75px;text-align:center;font-size:10.6px">Desactivar</div>
<div class="a" style="left:0;top:160px;width:400px;height:8px;background:#adadad;border-top:1px solid #7a7a7a"></div>
<div class="a" style="left:17px;top:177px;width:107px;height:2px;background:#7a7a7a"></div>
</div>



</body></html>
